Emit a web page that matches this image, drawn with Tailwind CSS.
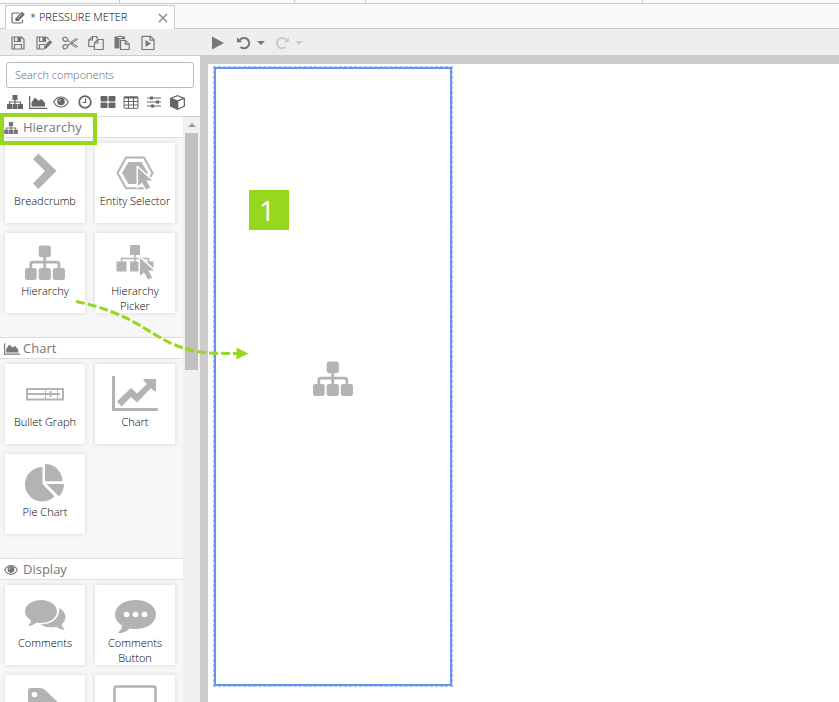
<!DOCTYPE html>
<html lang="en">
<head>
    <meta charset="UTF-8">
    <meta name="viewport" content="width=device-width, initial-scale=1.0">
    <title>Pressure Meter</title>
    <script src="https://cdn.jsdelivr.net/npm/@tailwindcss/browser@4"></script>
</head>
<body class="relative flex h-screen flex-col overflow-hidden bg-white font-['Open_Sans','Noto_Sans',sans-serif] text-[11px] font-light text-black">

    <!-- Shared icons -->
    <svg class="hidden">
        <symbol id="sitemap" viewBox="0 0 41 36">
            <rect x="14" y="0" width="12.5" height="12" rx="2.5"/>
            <rect x="0" y="23" width="12" height="12.5" rx="2.5"/>
            <rect x="14" y="23" width="12.5" height="12.5" rx="2.5"/>
            <rect x="28.5" y="23" width="12.5" height="12.5" rx="2.5"/>
            <path d="M20.2 11v13M6 24v-5q0-2 2-2h24.700q2 0 2 2v5" fill="none" stroke="currentColor" stroke-width="2.800"/>
        </symbol>
        <symbol id="sitemap-sm" viewBox="0 0 16 14">
            <path d="M5.500 0h5v5h-5zM0 9h5v5H0zM5.500 9h5v5h-5zM11 9h5v5h-5z"/>
            <path d="M8 4v6M2.500 10V7h11v3" fill="none" stroke="currentColor" stroke-width="1.200"/>
        </symbol>
        <symbol id="area" viewBox="0 0 18 13">
            <path d="M0 0h1.300v11.700H18V13H0z"/>
            <path d="M2.500 10.500V6.500L6 1.500l3.500 3.200L12.500 3l3.500 4v3.500z"/>
        </symbol>
        <symbol id="eye" viewBox="0 0 16 12">
            <path d="M.7 6Q3.500 1 8 1t7.300 5Q12.500 11 8 11T.7 6z" fill="none" stroke="currentColor" stroke-width="1.200"/>
            <circle cx="8" cy="5.500" r="3.800"/>
            <path d="M6 5.300Q6.200 3.700 7.800 3.500" fill="none" stroke="#fff" stroke-width=".8"/>
        </symbol>
        <symbol id="cursor" viewBox="0 0 18 25">
            <path d="M2 2v18l4-3.600 4.200 7.200 4-2-3.700-7.100H16z" stroke="#fff" stroke-width="3" paint-order="stroke"/>
        </symbol>
    </svg>

    <!-- Window strip -->
    <div class="flex h-1 shrink-0 border-b border-[#ccc] bg-[#fafafa]">
        <span class="w-[120px] border-r border-[#ccc]"></span>
        <span class="w-[175px] border-r border-[#ccc]"></span>
        <span class="w-[71px] border-r border-[#ccc]"></span>
        <span class="w-[277px] border-r border-[#ccc]"></span>
    </div>

    <!-- Tabs -->
    <nav class="flex h-[25px] shrink-0 items-end border-b border-[#ccc] bg-[#fafafa] pl-[5px]">
        <div class="-mb-px flex h-6 w-[170px] items-center border border-b-0 border-[#ccc] bg-white pr-1 pl-[5px]">
            <svg class="h-3.5 w-3.5 text-[#666]" viewBox="0 0 14 14" fill="currentColor">
                <path d="M8.500 2H2.500Q1 2 1 3.500v7Q1 12 2.500 12h7.500q1.500 0 1.500-1.500V8.500" fill="none" stroke="currentColor" stroke-width="1.200"/>
                <path d="M4.500 10V7.200L11 .7 13.800 3.500 7.300 10z"/>
                <path d="M6.500 7.500L11 3" stroke="#fff" stroke-width=".7"/>
            </svg>
            <a href="#" class="ml-[5px] flex-1">* PRESSURE METER</a>
            <button type="button" aria-label="Close tab" class="p-0.5 text-[#888]">
                <svg class="h-2.5 w-2.5" viewBox="0 0 10 10"><path d="M1 1l8 8M9 1L1 9" stroke="currentColor" stroke-width="1.500"/></svg>
            </button>
        </div>
    </nav>

    <!-- Toolbar -->
    <div class="flex h-[26px] shrink-0 items-center bg-[#eee] pt-0.5 pl-[5px] text-[#777]">
        <button type="button" aria-label="Save" class="flex w-[26px] justify-center">
            <svg class="h-4 w-4" viewBox="0 0 16 16" fill="none" stroke="currentColor" stroke-width="1.200">
                <path d="M2 2h9.500L14 4.500V14H2z"/><path d="M4.500 14V9.500h7V14M4.500 2v4.500h6V2"/><path d="M8 2.500h1.500v3H8z" fill="currentColor"/>
            </svg>
        </button>
        <button type="button" aria-label="Save as" class="flex w-[26px] justify-center">
            <svg class="h-4 w-[18px]" viewBox="0 0 18 16" fill="none" stroke="currentColor" stroke-width="1.200">
                <path d="M9 14H2V2h9.500L14 4.500"/><path d="M4.500 14V9.500H10M4.500 2v4.500h6V2"/><path d="M8 2.500h1.500v3H8z" fill="currentColor"/>
                <path d="M9 14v-2.700L14.800 5 17.300 7.300 11.500 13.500z" fill="currentColor" stroke="none"/>
            </svg>
        </button>
        <button type="button" aria-label="Cut" class="flex w-[26px] justify-center">
            <svg class="h-4 w-4" viewBox="0 0 16 16" fill="none" stroke="currentColor">
                <ellipse cx="3.300" cy="4.300" rx="2.500" ry="2" transform="rotate(25 3.300 4.300)" stroke-width="1.200"/><ellipse cx="3.300" cy="11.700" rx="2.500" ry="2" transform="rotate(-25 3.300 11.700)" stroke-width="1.200"/>
                <path d="M5.500 5.500l3 1.800 5.500-3.600 1.500.8-9.800 6M5.500 10.500l3-1.800 5.500 3.600 1.500-.8L9 7.500"/>
            </svg>
        </button>
        <button type="button" aria-label="Copy" class="flex w-[26px] justify-center">
            <svg class="h-4 w-4" viewBox="0 0 16 16" fill="none" stroke="currentColor" stroke-width="1.200">
                <path d="M6 11.500H.8V5L4.500 1.500H9V4"/><path d="M4.500 1.500V5H.8"/><path d="M9.800 4.500h5.400v10H6.300V8z"/><path d="M9.800 4.500V8H6.300"/>
            </svg>
        </button>
        <button type="button" aria-label="Paste" class="flex w-[26px] justify-center">
            <svg class="h-4 w-4" viewBox="0 0 16 16" fill="none" stroke="currentColor" stroke-width="1.200">
                <path d="M.5 1.500h3.300V.8h4v.7H11V4H5.500v9.500h-5z" fill="currentColor" stroke="none"/>
                <path d="M4 2.500h4" stroke="#eee"/>
                <path d="M6.600 5.300h4.700l3.900 3.900v5.300H6.600z"/><path d="M11.300 5.300v3.900h3.900"/>
            </svg>
        </button>
        <button type="button" aria-label="Preview page" class="flex w-[26px] justify-center">
            <svg class="h-4 w-4" viewBox="0 0 16 16" fill="none" stroke="currentColor" stroke-width="1.200">
                <path d="M2 1.300h8.500L14 4.800v9.700H2z"/><path d="M10 1.500v3.700h4"/><path d="M5.500 5l5.500 3.500-5.500 3.500z" fill="currentColor" stroke="none"/>
            </svg>
        </button>
        <button type="button" aria-label="Run" class="ml-11 flex w-[26px] justify-center">
            <svg class="h-3.5 w-3" viewBox="0 0 12 14" fill="currentColor"><path d="M0 .5L12 7 0 13.500z"/></svg>
        </button>
        <button type="button" aria-label="Undo" class="ml-1.5 flex items-center gap-1.5">
            <svg class="h-3.5 w-3.5" viewBox="0 0 14 14"><path d="M2.500 4.500A5.200 5.200 0 1 1 3.500 11" fill="none" stroke="currentColor" stroke-width="2"/><path d="M0 1.200v5h5z" fill="currentColor"/></svg>
            <svg class="h-1 w-2" viewBox="0 0 8 4" fill="currentColor"><path d="M0 0h8L4 4z"/></svg>
        </button>
        <button type="button" aria-label="Redo" disabled class="ml-2.5 flex items-center gap-1.5 text-[#ccc]">
            <svg class="h-3.5 w-3.5" viewBox="0 0 14 14"><path d="M11.500 4.500A5.200 5.200 0 1 0 10.500 11" fill="none" stroke="currentColor" stroke-width="2"/><path d="M14 1.200v5H9z" fill="currentColor"/></svg>
            <svg class="h-1 w-2" viewBox="0 0 8 4" fill="currentColor"><path d="M0 0h8L4 4z"/></svg>
        </button>
    </div>

    <div class="flex min-h-0 flex-1">
        <!-- Component palette -->
        <aside class="flex w-[200px] shrink-0 flex-col border-t border-[#ccc]">
            <div class="px-1.5 pt-1.5">
                <input type="search" aria-label="Search components" placeholder="Search components" class="block h-[26px] w-full rounded-[3px] border border-[#bbb] px-2 pb-0.5 placeholder:text-[#666]">
            </div>
            <div class="flex h-7 shrink-0 items-center pl-[3px] text-[#666]">
                <button type="button" aria-label="Hierarchy" class="flex w-[23px] justify-center"><svg class="h-3.5 w-4" fill="currentColor"><use href="#sitemap-sm"/></svg></button>
                <button type="button" aria-label="Chart" class="flex w-[23px] justify-center"><svg class="h-[13px] w-[18px]" fill="currentColor"><use href="#area"/></svg></button>
                <button type="button" aria-label="Display" class="flex w-6 justify-center"><svg class="h-3 w-4" fill="currentColor"><use href="#eye"/></svg></button>
                <button type="button" aria-label="Time" class="flex w-[23px] justify-center">
                    <svg class="h-3.5 w-3.5" viewBox="0 0 14 14" fill="none" stroke="currentColor"><circle cx="7" cy="7" r="5.800" stroke-width="1.800"/><path d="M7.500 3.500V7.500H4.500" stroke-width="1.200"/></svg>
                </button>
                <button type="button" aria-label="Layout" class="flex w-[23px] justify-center">
                    <svg class="h-3 w-4" viewBox="0 0 16 12" fill="currentColor"><rect x=".5" width="7" height="5.500" rx="1"/><rect x="8.500" width="7" height="5.500" rx="1"/><rect x=".5" y="6.500" width="7" height="5.500" rx="1"/><rect x="8.500" y="6.500" width="7" height="5.500" rx="1"/></svg>
                </button>
                <button type="button" aria-label="Table" class="flex w-[23px] justify-center">
                    <svg class="h-[13px] w-4" viewBox="0 0 16 13" fill="none" stroke="currentColor"><rect x="1" y="1" width="14" height="11.300" rx="1"/><path d="M1 1.500h14" stroke-width="2"/><path d="M1 5.500h14M1 9h14M5.500 1v11M10.500 1v11"/></svg>
                </button>
                <button type="button" aria-label="Inputs" class="flex w-[23px] justify-center">
                    <svg class="h-3 w-3.5" viewBox="0 0 14 12"><path d="M0 2h14M0 6h14M0 10h14" stroke="currentColor"/><path d="M3 .5h3v3H3zM9 4.500h3v3H9zM4 8.500h3v3H4z" fill="currentColor"/></svg>
                </button>
                <button type="button" aria-label="Models" class="flex w-6 justify-center">
                    <svg class="h-[15px] w-[15px]" viewBox="0 0 15 15" fill="currentColor"><path d="M7.500 0L15 3v8.500L7.500 15 0 11.500V3z"/><path d="M7.500 1.300L12.500 3.300 7.500 5.300 2.500 3.300zM8.300 6.500L13.700 4.300v6.500L8.300 13.300z" fill="#fff"/></svg>
                </button>
            </div>

            <div class="flex min-h-0 flex-1">
                <div class="flex-1 overflow-hidden bg-[#f7f7f7]">
                    <section class="pb-6">
                        <h2 class="flex h-[22px] items-center gap-[5px] border-y border-[#ddd] bg-white pt-0.5 pl-1 text-[13px] font-normal text-[#777]">
                            <svg class="h-3 w-3.5" fill="currentColor"><use href="#sitemap-sm"/></svg>Hierarchy
                        </h2>
                        <div class="grid grid-cols-[80px_80px] gap-2.5 px-[5px] pt-[5px] text-center leading-[15px]">
                            <div class="flex h-20 flex-col items-center bg-white pt-2.5 shadow-[0_0_5px_#0002]">
                                <svg class="mb-1 h-9 w-12 shrink-0 text-[#b3b3b3]" viewBox="0 0 48 36" fill="currentColor"><path d="M12 6L17.500.5 35.500 18 17.500 36 12 30.500 24 18z"/></svg>
                                Breadcrumb
                            </div>
                            <div class="flex h-20 flex-col items-center bg-white pt-2.5 shadow-[0_0_5px_#0002]">
                                <svg class="mb-1 h-9 w-12 shrink-0 overflow-visible text-[#b3b3b3]" viewBox="0 0 48 36" fill="currentColor">
                                    <path d="M15 4.500h18L41.500 20 33 35.200H15L6.500 20z" fill="none" stroke="currentColor" stroke-width="2"/>
                                    <path d="M17.500 9h13L37 20l-6.500 11h-13L11 20z"/>
                                    <use href="#cursor" x="25" y="13" width="18" height="25"/>
                                </svg>
                                Entity Selector
                            </div>
                            <div class="flex h-20 flex-col items-center bg-white pt-3 shadow-[0_0_5px_#0002]">
                                <svg class="mb-0.5 h-9 w-10 shrink-0 text-[#b3b3b3]" fill="currentColor"><use href="#sitemap"/></svg>
                                Hierarchy
                            </div>
                            <div class="flex h-20 flex-col items-center bg-white pt-3 shadow-[0_0_5px_#0002]">
                                <svg class="mb-0.5 h-9 w-12 shrink-0 text-[#b3b3b3]" viewBox="0 0 48 36" fill="currentColor">
                                    <path d="M19 0h10v10H19zM5.500 16.500h10v10h-10zM19 16.500h10v10H19zM32.500 16.500h10v10h-10z"/>
                                    <path d="M24 9v8M10.500 17v-3.500h27V17" fill="none" stroke="currentColor" stroke-width="1.500"/>
                                    <use href="#cursor" x="27" y="11" width="18" height="25"/>
                                </svg>
                                Hierarchy Picker
                            </div>
                        </div>
                    </section>

                    <section class="pb-6">
                        <h2 class="flex h-[22px] items-center gap-[3px] border-y border-[#ddd] bg-white pt-0.5 pl-1 text-[13px] font-normal text-[#777]">
                            <svg class="h-3 w-4" fill="currentColor"><use href="#area"/></svg>Chart
                        </h2>
                        <div class="grid grid-cols-[80px_80px] gap-2.5 px-[5px] pt-[5px] text-center leading-[15px]">
                            <div class="flex h-20 flex-col items-center bg-white pt-3 shadow-[0_0_5px_#0002]">
                                <svg class="mb-0.5 h-9 w-12 shrink-0 text-[#b3b3b3]" viewBox="0 0 48 36" fill="none" stroke="currentColor">
                                    <path d="M6 13h36v10.500H6z" stroke-width="2"/><path d="M7 18h32" stroke-width="2"/><path d="M24.500 13v10M36.500 13v10"/><path d="M29.500 15v6" stroke-width="2"/>
                                </svg>
                                Bullet Graph
                            </div>
                            <div class="flex h-20 flex-col items-center bg-white pt-3 shadow-[0_0_5px_#0002]">
                                <svg class="mb-0.5 h-9 w-12 shrink-0 text-[#b3b3b3]" viewBox="0 0 48 36" fill="currentColor">
                                    <path d="M1 0h3v32h43v3H1z"/>
                                    <path d="M6 25.500L20 12l6 5.500L36 8l-3.500-3.500Q32 3 33.500 3H45v11.500q-.5 1.500-2 .5L40 12 26 26.500l-6-5.500-9.500 9.500z"/>
                                </svg>
                                Chart
                            </div>
                            <div class="flex h-20 flex-col items-center bg-white pt-2.5 shadow-[0_0_5px_#0002]">
                                <svg class="mb-1 h-9 w-10 shrink-0 overflow-visible text-[#b3b3b3]" viewBox="0 0 40 36" fill="currentColor">
                                    <path d="M17.500 3V20l12 12.500A17.300 17.300 0 1 1 17.500 3z"/><path d="M20 0a17.300 17.300 0 0 1 17.500 17.300H20z"/><path d="M21.500 20H39q0 7-5 12.500z"/>
                                </svg>
                                Pie Chart
                            </div>
                        </div>
                    </section>

                    <section class="pb-6">
                        <h2 class="flex h-[22px] items-center gap-[5px] border-y border-[#ddd] bg-white pt-0.5 pl-1 text-[13px] font-normal text-[#777]">
                            <svg class="h-3 w-3.5" fill="currentColor"><use href="#eye"/></svg>Display
                        </h2>
                        <div class="grid grid-cols-[80px_80px] gap-2.5 px-[5px] pt-[5px] text-center leading-[15px]">
                            <div class="flex h-20 flex-col items-center bg-white pt-3 shadow-[0_0_5px_#0002]">
                                <svg class="mb-0.5 h-9 w-[41px] shrink-0 text-[#b3b3b3]" viewBox="0 0 41 36" fill="currentColor">
                                    <path d="M34.500 11q6 4 6 9 0 4-4 7.500.5 2.500 3 4.500 0 .8-1 .8-4-.5-7.500-3Q22 31.500 15 27.500 34 27 34.500 11z"/>
                                    <path d="M16 3c9 0 16 5 16 11.500S25 26 16 26q-2.500 0-4.500-.5Q8 28.500 4 29q-1-.3-.5-1 2.500-2 2.500-4.500Q0 19.500 0 14.500C0 8 7 3 16 3z"/>
                                </svg>
                                Comments
                            </div>
                            <div class="flex h-20 flex-col items-center bg-white pt-3 shadow-[0_0_5px_#0002]">
                                <svg class="mb-0.5 h-9 w-[41px] shrink-0 text-[#b3b3b3]" viewBox="0 0 41 36" fill="currentColor">
                                    <path d="M20.500 3C32 3 41 9 41 17.500S32 32 20.500 32q-3 0-5.500-.5Q10 36 4 36.500q-1.500-.2-.7-1.200Q7 32 7 28.500 0 24 0 17.500C0 9 9 3 20.500 3z"/>
                                    <g fill="#fff"><circle cx="11.500" cy="17.500" r="2.800"/><circle cx="20.500" cy="17.500" r="2.800"/><circle cx="29.500" cy="17.500" r="2.800"/></g>
                                </svg>
                                Comments Button
                            </div>
                            <div class="flex h-20 flex-col items-center bg-white pt-3 shadow-[0_0_5px_#0002]">
                                <svg class="h-9 w-[41px] shrink-0 text-[#b3b3b3]" viewBox="0 0 41 36" fill="currentColor">
                                    <path d="M3 3.500Q3 1 5.500 1H15q3 0 5 2l17 16-15 16L5 18q-2-2-2-4.500z"/><circle cx="9.500" cy="7.500" r="2.800" fill="#fff"/>
                                </svg>
                            </div>
                            <div class="flex h-20 flex-col items-center bg-white pt-2.5 shadow-[0_0_5px_#0002]">
                                <svg class="h-9 w-12 shrink-0 text-[#b3b3b3]" viewBox="0 0 48 36" fill="none" stroke="currentColor" stroke-width="2.500"><rect x="3.500" y="1.500" width="41" height="28" rx="2"/></svg>
                            </div>
                        </div>
                    </section>
                </div>

                <!-- Scrollbar -->
                <div class="flex w-[17px] shrink-0 flex-col items-center border-t border-[#ccc] bg-[#f0f0f0]">
                    <svg class="my-1.5 h-1 w-2" viewBox="0 0 8 4" fill="#999"><path d="M0 4h8L4 0z"/></svg>
                    <div class="h-[237px] w-[13px] bg-[#c1c1c1]"></div>
                </div>
            </div>
        </aside>

        <!-- Design canvas -->
        <main class="flex-1 border-t-[9px] border-l-8 border-[#ccc] bg-white pt-0.5 pb-[15px] pl-[5px]">
            <div class="h-full w-60 border border-dashed border-[#a4c2f7]">
                <div class="flex h-full items-center justify-center border-2 border-[#6495ed] pt-1">
                    <svg class="h-9 w-10 text-[#b3b3b3]" fill="currentColor"><use href="#sitemap"/></svg>
                </div>
            </div>
        </main>
    </div>

    <!-- Step annotations -->
    <div class="absolute top-[113px] left-0 h-8 w-[97px] border-4 border-[#97d71d]"></div>
    <div class="absolute top-[190px] left-[249px] flex h-10 w-10 items-center justify-center bg-[#97d71d] pr-1 text-[28px] font-normal text-white">1</div>
    <svg class="absolute top-[295px] left-[70px] h-[70px] w-[185px]" viewBox="70 295 185 70">
        <path d="M76 301.500C130 312 150 335 175 345S215 353 238 353.500" fill="none" stroke="#97d71d" stroke-width="3" stroke-dasharray="9 3"/>
        <path d="M236.500 347.500v12l12-6z" fill="#97d71d"/>
    </svg>
</body>
</html>
